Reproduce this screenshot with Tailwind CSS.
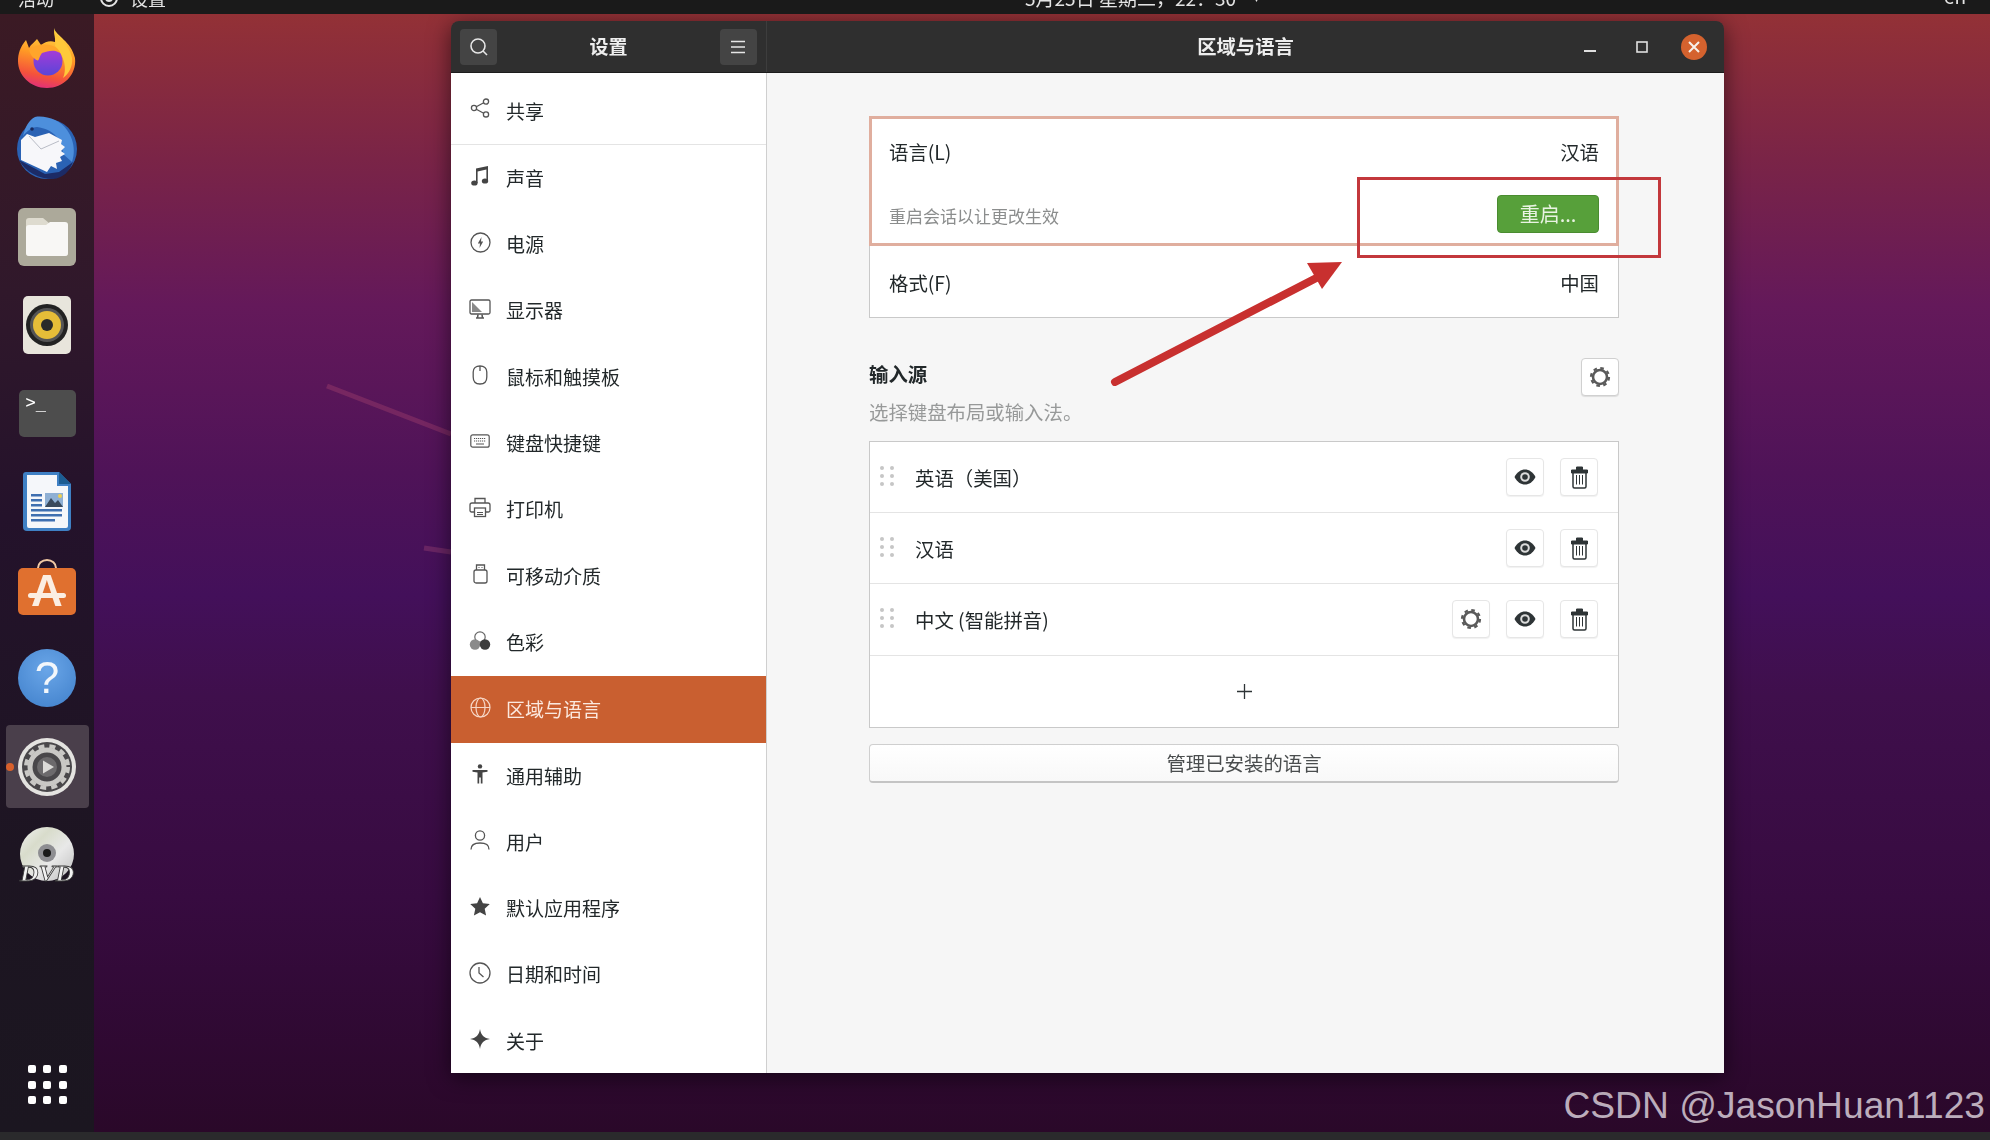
<!DOCTYPE html>
<html lang="zh-CN">
<head>
    <meta charset="UTF-8">
    <title>区域与语言</title>
    <script src="https://cdn.jsdelivr.net/npm/@tailwindcss/browser@4"></script>
</head>
<body class="h-[1140px] w-[1990px] overflow-hidden flex flex-col bg-[#2a2a2c] [font-family:'Noto_Sans_CJK_SC','Noto_Sans',sans-serif]">

    <!-- Top bar (cut off by the screenshot) -->
    <header class="h-[14px] shrink-0 overflow-hidden bg-[#1a1a1a] text-[#e4e4e4] text-[18px] leading-[18px] relative blur-[0.4px]">
        <div class="-mt-[11px] h-[18px] flex items-center justify-between pl-[18px] pr-[24px]">
            <div class="flex items-center">
                <span>活动</span>
                <svg class="ml-[44px] mr-[10px]" width="22" height="22" viewBox="0 0 22 22" fill="none" stroke="#e4e4e4" stroke-width="2"><circle cx="11" cy="11" r="8"/><circle cx="11" cy="11" r="3"/></svg>
                <span>设置</span>
            </div>
            <div class="absolute left-[1025px] top-[-11px] flex items-center whitespace-nowrap text-[19px]">
                <span>5月25日 星期二，22：30</span>
                <span class="ml-[18px] text-[10px]">▾</span>
            </div>
            <span class="-mt-[5px] text-[19px]">en</span>
        </div>
    </header>

    <div class="flex-1 flex min-h-0">
        <!-- Dock -->
        <nav class="w-[94px] shrink-0 flex flex-col items-center pt-[2px] pb-[28px] blur-[0.4px] bg-[linear-gradient(180deg,#3b1a24_0%,#30182b_25%,#24122b_45%,#1d1522_75%,#1b1620_100%)]">
            <div class="h-[88.3px] w-full flex items-center justify-center">
                <svg class="-mt-[4px]" width="60" height="60" viewBox="0 0 60 60">
                    <defs>
                        <linearGradient id="ffBody" x1="0.6" y1="0" x2="0.4" y2="1"><stop offset="0" stop-color="#ffe14a"/><stop offset="0.45" stop-color="#ff9a25"/><stop offset="0.8" stop-color="#f4523b"/><stop offset="1" stop-color="#e0307a"/></linearGradient>
                        <linearGradient id="ffBall" x1="0.5" y1="0" x2="0.5" y2="1"><stop offset="0" stop-color="#b03ad8"/><stop offset="1" stop-color="#5a45d8"/></linearGradient>
                    </defs>
                    <path d="M37 0C39 8 54 13 58 30C60 47 46 60 30 60C13 60 1 47 1 33C1 26 3 19 9 12L12 20C14 16 18 14 20 11L24 17C28 14 33 12 38 14C39 9 37 5 37 0Z" fill="url(#ffBody)"/>
                    <path d="M37 2C40 9 52 15 55 30C56 38 52 46 46 50C50 42 48 28 38 18C39 12 37 7 37 2Z" fill="#ffc93a"/>
                    <circle cx="31" cy="33" r="14.5" fill="url(#ffBall)"/>
                    <path d="M12 22C18 17 27 15 36 18C40 19.5 42 22 43 25C37 21 31 23 25 25C21 30 23 35 18 31C15 29 13 26 12 22Z" fill="#ffa52b"/>
                </svg>
            </div>
            <div class="h-[88.3px] w-full flex items-center justify-center">
                <svg width="64" height="64" viewBox="0 0 64 64">
                    <circle cx="32" cy="33" r="30" fill="#2a62b4"/>
                    <path d="M20 1C30 -1 46 4 52 14C58 22 61 34 57 46L48 38C48 24 38 13 22 11C17 11 12 15 8 20C10 11 14 4 20 1Z" fill="#4d8fdc"/>
                    <path d="M4 44C10 56 24 63 38 63C48 62 54 56 58 46L44 56L30 58Z" fill="#1c2b66"/>
                    <path d="M6 24L12 18L20 21L34 17L47 24L46 28L50 31L46 35L50 38L45 41L47 45L41 47L42 53L36 50L32 56L6 44Z" fill="#f7f7fa"/>
                    <path d="M14 20L26 33L44 25" fill="none" stroke="#b9bcc6" stroke-width="1"/>
                    <circle cx="17" cy="13" r="1.8" fill="#1a2a5e"/>
                </svg>
            </div>
            <div class="h-[88.3px] w-full flex items-center justify-center">
                <svg width="58" height="58" viewBox="0 0 58 58">
                    <rect width="58" height="58" rx="6" fill="#aca99a"/>
                    <path d="M8 13a3 3 0 0 1 3-3h14l6 5h16a3 3 0 0 1 3 3v27a3 3 0 0 1-3 3H11a3 3 0 0 1-3-3Z" fill="#dedbcf"/>
                    <path d="M8 20a3 3 0 0 1 3-3h17l4-3h15a3 3 0 0 1 3 3v28a3 3 0 0 1-3 3H11a3 3 0 0 1-3-3Z" fill="#f8f7f5"/>
                </svg>
            </div>
            <div class="h-[88.3px] w-full flex items-center justify-center">
                <svg width="48" height="58" viewBox="0 0 48 58">
                    <rect width="48" height="58" rx="5" fill="#e8e5dc"/>
                    <circle cx="24" cy="29" r="21" fill="#222"/>
                    <circle cx="24" cy="29" r="17" fill="#555"/>
                    <circle cx="24" cy="29" r="14" fill="#e6bd38"/>
                    <circle cx="24" cy="29" r="6" fill="#2a2a2a"/>
                </svg>
            </div>
            <div class="h-[88.3px] w-full flex items-center justify-center">
                <div class="w-[57px] h-[47px] rounded-[5px] bg-[#4d4d4d] relative">
                    <span class="absolute left-[7px] top-[1px] text-[17px] leading-[22px] text-white [font-family:'DejaVu_Sans_Mono',monospace]">&gt;_</span>
                </div>
            </div>
            <div class="h-[88.3px] w-full flex items-center justify-center">
                <svg width="48" height="60" viewBox="0 0 48 60">
                    <path d="M3 0H36L48 12V55a4 4 0 0 1-4 4H4a4 4 0 0 1-4-4V3a3 3 0 0 1 3-3Z" fill="#3f80c4"/>
                    <path d="M4 3H34V14H45V54a2 2 0 0 1-2 2H6a2 2 0 0 1-2-2Z" fill="#f5f7fa"/>
                    <path d="M36 0L48 12H36Z" fill="#1c5d92"/>
                    <g fill="#3f6fb0"><rect x="8" y="22" width="11" height="2.5"/><rect x="8" y="27" width="11" height="2.5"/><rect x="8" y="32" width="11" height="2.5"/><rect x="8" y="37" width="31" height="2.5"/><rect x="8" y="42" width="31" height="2.5"/><rect x="8" y="47" width="24" height="2.5"/></g>
                    <rect x="22" y="21" width="18" height="14" fill="#8fb0d4"/>
                    <path d="M22 35L28 26L32 31L35 28L40 35Z" fill="#3a4a5c"/>
                    <circle cx="37" cy="24" r="2" fill="#f0d050"/>
                </svg>
            </div>
            <div class="h-[88.3px] w-full flex items-center justify-center">
                <div class="relative w-[58px] h-[56px] -mt-[6px]">
                    <svg class="absolute left-[18px] top-0" width="22" height="14" viewBox="0 0 22 14" fill="none" stroke="#f1c9a4" stroke-width="2"><path d="M2 14V9a9 8 0 0 1 18 0v5"/></svg>
                    <div class="absolute left-0 right-0 bottom-0 h-[47px] rounded-[5px] bg-[#e0702f] flex items-center justify-center text-[44px] leading-none font-bold text-[#fbeee2] [font-family:'Liberation_Sans',sans-serif]">A</div>
                    <span class="absolute left-[10px] top-[34px] w-[38px] h-[5px] rounded-full bg-[#fbeee2]"></span>
                </div>
            </div>
            <div class="h-[88.3px] w-full flex items-center justify-center">
                <div class="w-[58px] h-[58px] rounded-full bg-[radial-gradient(circle_at_50%_35%,#6aa6e8,#3f7fca)] flex items-center justify-center text-[44px] leading-none text-[#f3f7fb] [font-family:'Liberation_Sans',sans-serif]">?</div>
            </div>
            <div class="h-[88.3px] w-full flex items-center justify-center relative">
                <div class="w-[83px] h-[83px] rounded-[4px] bg-[#4a3f4b] flex items-center justify-center">
                    <svg width="58" height="58" viewBox="0 0 58 58" fill="none">
                        <circle cx="29" cy="29" r="29" fill="#e4e3e0"/>
                        <circle cx="29" cy="29" r="25" fill="#49474a"/>
                        <circle cx="29" cy="29" r="17" stroke="#c9c8c5" stroke-width="5"/>
                        <circle cx="29" cy="29" r="21" stroke="#c9c8c5" stroke-width="4" stroke-dasharray="6 5.2"/>
                        <circle cx="29" cy="29" r="10" fill="#6c6a6c"/>
                        <path d="M25 22.5L36 29L25 35.5Z" fill="#dcdbd8"/>
                    </svg>
                </div>
                <span class="absolute left-[6px] top-[41px] w-[8px] h-[8px] rounded-full bg-[#d8602c]"></span>
            </div>
            <div class="h-[88.3px] w-full flex items-center justify-center">
                <svg width="58" height="60" viewBox="0 0 58 60" class="overflow-visible">
                    <defs><linearGradient id="disc" x1="0" y1="0" x2="1" y2="1"><stop offset="0" stop-color="#f0f0f0"/><stop offset="0.3" stop-color="#d8dccb"/><stop offset="0.6" stop-color="#e8e8e8"/><stop offset="1" stop-color="#bdbdbd"/></linearGradient></defs>
                    <circle cx="29" cy="29" r="27" fill="url(#disc)"/>
                    <circle cx="29" cy="28" r="9" fill="#8e8e92"/>
                    <circle cx="29" cy="28" r="4" fill="#1a1a1a"/>
                    <text x="29" y="56" text-anchor="middle" textLength="54" lengthAdjust="spacingAndGlyphs" font-family="Liberation Serif" font-weight="700" font-style="italic" font-size="24" fill="#f2f2f2" stroke="#3a3a3a" stroke-width="0.8">DVD</text>
                </svg>
            </div>
            <div class="mt-auto grid grid-cols-3 gap-x-[7.5px] gap-y-[7.5px]">
                <span class="w-[8px] h-[8px] rounded-[2px] bg-white"></span><span class="w-[8px] h-[8px] rounded-[2px] bg-white"></span><span class="w-[8px] h-[8px] rounded-[2px] bg-white"></span>
                <span class="w-[8px] h-[8px] rounded-[2px] bg-white"></span><span class="w-[8px] h-[8px] rounded-[2px] bg-white"></span><span class="w-[8px] h-[8px] rounded-[2px] bg-white"></span>
                <span class="w-[8px] h-[8px] rounded-[2px] bg-white"></span><span class="w-[8px] h-[8px] rounded-[2px] bg-white"></span><span class="w-[8px] h-[8px] rounded-[2px] bg-white"></span>
            </div>
        </nav>

        <!-- Desktop -->
        <main class="flex-1 relative overflow-hidden bg-[linear-gradient(180deg,#933136_0%,#7a2447_13%,#64195a_26%,#4f1358_41%,#43105a_52%,#3f0f4c_61%,#370b40_79%,#2a0829_100%)]">
            <svg class="absolute left-0 top-0" width="400" height="560" fill="none">
                <path d="M233 372L357 420" stroke="#b0486f" stroke-opacity="0.35" stroke-width="5"/>
                <path d="M330 534L357 538" stroke="#a84a78" stroke-opacity="0.35" stroke-width="5"/>
            </svg>
            <p class="absolute right-[5px] bottom-[7px] text-[37.2px] leading-[40px] whitespace-nowrap text-[#bcadbc] [font-family:'Liberation_Sans',sans-serif]">CSDN @JasonHuan1123</p>

            <!-- Settings window -->
            <section class="absolute left-[357px] top-[7px] w-[1273px] h-[1052px] flex flex-col rounded-t-[8px] overflow-hidden blur-[0.4px] shadow-[0_4px_22px_rgba(0,0,0,0.55)]">
                <div class="h-[52px] shrink-0 flex bg-[#2f2f2f] text-[#eeeeee] border-b border-[#1c1c1c]">
                    <div class="w-[315px] flex items-center justify-between px-[9px]">
                        <button class="w-[37px] h-[36px] rounded-[4px] bg-[#444444] flex items-center justify-center">
                            <svg width="20" height="20" viewBox="0 0 20 20" fill="none" stroke="#e6e6e6" stroke-width="1.6"><circle cx="9" cy="9" r="7"/><path d="M14 14L18 18"/></svg>
                        </button>
                        <span class="text-[19px] font-bold">设置</span>
                        <button class="w-[37px] h-[36px] rounded-[4px] bg-[#444444] flex items-center justify-center">
                            <svg width="16" height="14" viewBox="0 0 16 14" stroke="#e6e6e6" stroke-width="1.6"><path d="M1 1.5H15M1 7H15M1 12.5H15"/></svg>
                        </button>
                    </div>
                    <div class="w-px bg-[#3d3d3d]"></div>
                    <div class="flex-1 grid grid-cols-[1fr_auto_1fr] items-center">
                        <span></span>
                        <span class="text-[19.3px] font-bold">区域与语言</span>
                        <div class="flex items-center justify-end gap-[26px] pr-[17px]">
                            <span class="w-[26px] h-[26px] flex items-center justify-center">
                                <svg width="12" height="12" viewBox="0 0 12 12" stroke="#e0e0e0" stroke-width="2"><path d="M0 10H12"/></svg>
                            </span>
                            <span class="w-[26px] h-[26px] flex items-center justify-center">
                                <svg width="12" height="12" viewBox="0 0 12 12" fill="none" stroke="#e0e0e0" stroke-width="1.6"><rect x="1" y="1" width="10" height="10"/></svg>
                            </span>
                            <span class="w-[26px] h-[26px] rounded-full bg-[#d4622e] flex items-center justify-center">
                                <svg width="12" height="12" viewBox="0 0 12 12" stroke="#f6f0ea" stroke-width="2"><path d="M1 1L11 11M11 1L1 11"/></svg>
                            </span>
                        </div>
                    </div>
                </div>

                <div class="flex-1 flex min-h-0 relative">
                    <!-- Sidebar -->
                    <aside class="w-[316px] shrink-0 bg-white border-r border-[#cfcfcf] text-[19px] text-[#22282a]">
                        <a class="h-[72px] flex items-center pl-[18px] pt-[5px] gap-[15px] border-b border-[#e4e4e4]">
                            <span class="w-[22px] flex justify-center -mt-[6px]"><svg width="20" height="20" viewBox="0 0 20 20" fill="none" stroke="#555" stroke-width="1.3"><circle cx="4" cy="10" r="2.6"/><circle cx="16" cy="3.6" r="2.6"/><circle cx="16" cy="16.4" r="2.6"/><path d="M6.3 8.8L13.7 4.8M6.3 11.2L13.7 15.2"/></svg></span>
                            <span>共享</span>
                        </a>
                        <a class="h-[66.3px] flex items-center pl-[18px] gap-[15px]">
                            <span class="w-[22px] flex justify-center -mt-[4px]"><svg width="18" height="20" viewBox="0 0 18 20" fill="#444"><path d="M5 2.5L17 0V15h-1.6V3.6L6.6 5.4V17H5Z"/><ellipse cx="3.4" cy="17" rx="3.2" ry="2.6"/><ellipse cx="14" cy="15" rx="3.2" ry="2.6"/></svg></span>
                            <span>声音</span>
                        </a>
                        <a class="h-[66.3px] flex items-center pl-[18px] gap-[15px]">
                            <span class="w-[22px] flex justify-center -mt-[4px]"><svg width="21" height="21" viewBox="0 0 21 21" fill="none" stroke="#555" stroke-width="1.3"><circle cx="10.5" cy="10.5" r="9.5"/><path d="M11.5 5L7.8 11.4H10L9.5 16L13.2 9.6H11Z" fill="#555" stroke="none"/></svg></span>
                            <span>电源</span>
                        </a>
                        <a class="h-[66.3px] flex items-center pl-[18px] gap-[15px]">
                            <span class="w-[22px] flex justify-center -mt-[4px]"><svg width="22" height="20" viewBox="0 0 22 20" fill="none" stroke="#555" stroke-width="1.3"><rect x="1" y="1" width="20" height="14" rx="1.5"/><path d="M3 3L13 13H3Z" fill="#888" stroke="none"/><path d="M7 19H15M9 15.5L8.5 19M13 15.5L13.5 19" stroke-width="1.6"/></svg></span>
                            <span>显示器</span>
                        </a>
                        <a class="h-[66.3px] flex items-center pl-[18px] gap-[15px]">
                            <span class="w-[22px] flex justify-center -mt-[4px]"><svg width="16" height="20" viewBox="0 0 16 20" fill="none" stroke="#555" stroke-width="1.3"><path d="M1.2 7C1.2 3 4 1 8 1S14.8 3 14.8 7V12C14.8 16.5 12 19 8 19S1.2 16.5 1.2 12Z"/><path d="M8 1V6"/></svg></span>
                            <span>鼠标和触摸板</span>
                        </a>
                        <a class="h-[66.3px] flex items-center pl-[18px] gap-[15px]">
                            <span class="w-[22px] flex justify-center -mt-[4px]"><svg width="20" height="14" viewBox="0 0 20 14" fill="none" stroke="#555" stroke-width="1.2"><rect x="0.8" y="0.8" width="18.4" height="12.4" rx="2"/><path d="M4 4.5H16M4 7H16" stroke-dasharray="1.2 0.8"/><path d="M6 10H14"/></svg></span>
                            <span>键盘快捷键</span>
                        </a>
                        <a class="h-[66.3px] flex items-center pl-[18px] gap-[15px]">
                            <span class="w-[22px] flex justify-center -mt-[4px]"><svg width="22" height="21" viewBox="0 0 22 21" fill="none" stroke="#555" stroke-width="1.3"><path d="M6 6V1.5H16V6"/><path d="M5 15H2.5A1.5 1.5 0 0 1 1 13.5V8A2 2 0 0 1 3 6H19A2 2 0 0 1 21 8V13.5A1.5 1.5 0 0 1 19.5 15H17"/><rect x="5.5" y="11" width="11" height="8.5"/><path d="M8 15.5H14M8 17.5H14" stroke-width="1"/></svg></span>
                            <span>打印机</span>
                        </a>
                        <a class="h-[66.3px] flex items-center pl-[18px] gap-[15px]">
                            <span class="w-[22px] flex justify-center -mt-[4px]"><svg width="15" height="20" viewBox="0 0 15 20" fill="none" stroke="#555" stroke-width="1.3"><rect x="1" y="6" width="13" height="13" rx="2"/><path d="M3.5 6V1H11.5V6"/><path d="M5.5 3.5H6.5M8.5 3.5H9.5" stroke-width="1"/></svg></span>
                            <span>可移动介质</span>
                        </a>
                        <a class="h-[66.3px] flex items-center pl-[18px] gap-[15px]">
                            <span class="w-[22px] flex justify-center -mt-[4px]"><svg width="22" height="19" viewBox="0 0 22 19"><circle cx="11" cy="6" r="5.2" fill="#fff" stroke="#666" stroke-width="1.2"/><circle cx="6" cy="13.5" r="5.2" fill="#8a8a8a"/><circle cx="16" cy="13.5" r="5.2" fill="#3c3c3c"/></svg></span>
                            <span>色彩</span>
                        </a>
                        <a class="h-[66.3px] mt-[1px] flex items-center pl-[18px] gap-[15px] bg-[#c95f30] text-[#fbe8de]">
                            <span class="w-[22px] flex justify-center -mt-[4px]"><svg width="21" height="21" viewBox="0 0 21 21" fill="none" stroke="#f6d6c6" stroke-width="1.2"><circle cx="10.5" cy="10.5" r="9.5"/><ellipse cx="10.5" cy="10.5" rx="4.5" ry="9.5"/><path d="M1 10.5H20"/></svg></span>
                            <span>区域与语言</span>
                        </a>
                        <a class="h-[66.3px] flex items-center pl-[18px] gap-[15px]">
                            <span class="w-[22px] flex justify-center -mt-[4px]"><svg width="16" height="20" viewBox="0 0 16 20" fill="#444"><circle cx="8" cy="2.4" r="2.2"/><path d="M0.5 6H15.5V7.8L10.5 8.5V19.5H8.8V13.5H7.2V19.5H5.5V8.5L0.5 7.8Z"/></svg></span>
                            <span>通用辅助</span>
                        </a>
                        <a class="h-[66.3px] flex items-center pl-[18px] gap-[15px]">
                            <span class="w-[22px] flex justify-center -mt-[4px]"><svg width="20" height="20" viewBox="0 0 20 20" fill="none" stroke="#555" stroke-width="1.3"><circle cx="10" cy="5.5" r="4.6"/><path d="M1 19.5C1 15 4 13 10 13S19 15 19 19.5"/></svg></span>
                            <span>用户</span>
                        </a>
                        <a class="h-[66.3px] flex items-center pl-[18px] gap-[15px]">
                            <span class="w-[22px] flex justify-center -mt-[4px]"><svg width="20" height="19" viewBox="0 0 20 19" fill="#444"><path d="M10 0L12.9 6.3L19.8 7.1L14.7 11.8L16.1 18.6L10 15.2L3.9 18.6L5.3 11.8L0.2 7.1L7.1 6.3Z"/></svg></span>
                            <span>默认应用程序</span>
                        </a>
                        <a class="h-[66.3px] flex items-center pl-[18px] gap-[15px]">
                            <span class="w-[22px] flex justify-center -mt-[4px]"><svg width="22" height="22" viewBox="0 0 22 22" fill="none" stroke="#555" stroke-width="1.3"><circle cx="11" cy="11" r="10"/><path d="M10 5V11L14.5 15"/></svg></span>
                            <span>日期和时间</span>
                        </a>
                        <a class="h-[66.3px] flex items-center pl-[18px] gap-[15px]">
                            <span class="w-[22px] flex justify-center -mt-[4px]"><svg width="20" height="20" viewBox="0 0 20 20" fill="#444"><path d="M10 0C10.8 6 14 9.2 20 10C14 10.8 10.8 14 10 20C9.2 14 6 10.8 0 10C6 9.2 9.2 6 10 0Z"/></svg></span>
                            <span>关于</span>
                        </a>
                    </aside>

                    <!-- Region and language panel -->
                    <div class="flex-1 bg-[#f6f6f6] pl-[102px] pr-[105px] pt-[43px] text-[19.4px] text-[#22282a]">
                        <div class="border border-[#c9c9c9] bg-white">
                            <div class="-m-px border-[3px] border-[#e0ae9e]">
                                <div class="h-[66px] flex items-center justify-between px-[17px]">
                                    <span>语言(L)</span>
                                    <span>汉语</span>
                                </div>
                                <div class="h-[58px] flex items-center justify-between px-[17px]">
                                    <span class="text-[17px] text-[#8b8d8d] pt-[3px]">重启会话以让更改生效</span>
                                    <button class="w-[102px] h-[38px] rounded-[4px] bg-[#57a03a] border border-[#4a8c30] text-[20px] leading-[32px] text-[#e9f3e2]">重启...</button>
                                </div>
                            </div>
                            <div class="h-[72px] flex items-center justify-between px-[19px] pt-[3px]">
                                <span>格式(F)</span>
                                <span>中国</span>
                            </div>
                        </div>

                        <div class="mt-[40px] mb-[15px] flex items-start justify-between">
                            <div class="pt-[2px]">
                                <h2 class="h-[28px] leading-[28px] font-bold">输入源</h2>
                                <p class="mt-[10px] h-[28px] leading-[28px] text-[#979999]">选择键盘布局或输入法。</p>
                            </div>
                            <button class="w-[38px] h-[38px] rounded-[4px] bg-white border border-[#d0d0d0] shadow-[0_1px_1px_rgba(0,0,0,0.1)] flex items-center justify-center">
                                <svg width="22" height="22" viewBox="0 0 22 22" fill="none" stroke="#5a5a5a"><circle cx="11" cy="11" r="7" stroke-width="2.6"/><circle cx="11" cy="11" r="9" stroke-width="2.2" stroke-dasharray="3.6 3.47"/></svg>
                            </button>
                        </div>

                        <div class="border border-[#c9c9c9] bg-white">
                            <div class="h-[71.2px] flex items-center pl-[10px] pr-[20px] border-b border-[#e4e4e4]">
                                <span class="w-[14px] -mt-[2px] grid grid-cols-2 gap-x-[5px] gap-y-[4px] justify-items-center"><i class="w-[4px] h-[4px] rounded-full bg-[#c6c6c6]"></i><i class="w-[4px] h-[4px] rounded-full bg-[#c6c6c6]"></i><i class="w-[4px] h-[4px] rounded-full bg-[#c6c6c6]"></i><i class="w-[4px] h-[4px] rounded-full bg-[#c6c6c6]"></i><i class="w-[4px] h-[4px] rounded-full bg-[#c6c6c6]"></i><i class="w-[4px] h-[4px] rounded-full bg-[#c6c6c6]"></i></span>
                                <span class="ml-[21px] flex-1">英语（美国）</span>
                                <div class="flex gap-[16px]">
                                    <button class="w-[38px] h-[38px] rounded-[4px] bg-white border border-[#e6e6e6] shadow-[0_1px_1px_rgba(0,0,0,0.06)] flex items-center justify-center">
                                        <svg width="22" height="16" viewBox="0 0 22 16"><path d="M0.5 8C3 3 7 0.5 11 0.5S19 3 21.5 8C19 13 15 15.5 11 15.5S3 13 0.5 8Z" fill="#2e3436"/><circle cx="11" cy="8" r="4.8" fill="#dcdcdc"/><circle cx="11" cy="8" r="2.8" fill="#2e3436"/></svg>
                                    </button>
                                    <button class="w-[38px] h-[38px] rounded-[4px] bg-white border border-[#e6e6e6] shadow-[0_1px_1px_rgba(0,0,0,0.06)] flex items-center justify-center">
                                        <svg width="17" height="23" viewBox="0 0 17 23" fill="none" stroke="#2e3436"><path d="M0.5 4H16.5V7H0.5Z" fill="#2e3436"/><path d="M5.5 4V1H11.5V4" fill="#2e3436"/><path d="M2 7V20.5A1.5 1.5 0 0 0 3.5 22H13.5A1.5 1.5 0 0 0 15 20.5V7" stroke-width="1.5"/><path d="M5.5 9V18.5M8.5 9V18.5M11.5 9V18.5" stroke-width="1"/></svg>
                                    </button>
                                </div>
                            </div>
                            <div class="h-[71.2px] flex items-center pl-[10px] pr-[20px] border-b border-[#e4e4e4]">
                                <span class="w-[14px] -mt-[2px] grid grid-cols-2 gap-x-[5px] gap-y-[4px] justify-items-center"><i class="w-[4px] h-[4px] rounded-full bg-[#c6c6c6]"></i><i class="w-[4px] h-[4px] rounded-full bg-[#c6c6c6]"></i><i class="w-[4px] h-[4px] rounded-full bg-[#c6c6c6]"></i><i class="w-[4px] h-[4px] rounded-full bg-[#c6c6c6]"></i><i class="w-[4px] h-[4px] rounded-full bg-[#c6c6c6]"></i><i class="w-[4px] h-[4px] rounded-full bg-[#c6c6c6]"></i></span>
                                <span class="ml-[21px] flex-1">汉语</span>
                                <div class="flex gap-[16px]">
                                    <button class="w-[38px] h-[38px] rounded-[4px] bg-white border border-[#e6e6e6] shadow-[0_1px_1px_rgba(0,0,0,0.06)] flex items-center justify-center">
                                        <svg width="22" height="16" viewBox="0 0 22 16"><path d="M0.5 8C3 3 7 0.5 11 0.5S19 3 21.5 8C19 13 15 15.5 11 15.5S3 13 0.5 8Z" fill="#2e3436"/><circle cx="11" cy="8" r="4.8" fill="#dcdcdc"/><circle cx="11" cy="8" r="2.8" fill="#2e3436"/></svg>
                                    </button>
                                    <button class="w-[38px] h-[38px] rounded-[4px] bg-white border border-[#e6e6e6] shadow-[0_1px_1px_rgba(0,0,0,0.06)] flex items-center justify-center">
                                        <svg width="17" height="23" viewBox="0 0 17 23" fill="none" stroke="#2e3436"><path d="M0.5 4H16.5V7H0.5Z" fill="#2e3436"/><path d="M5.5 4V1H11.5V4" fill="#2e3436"/><path d="M2 7V20.5A1.5 1.5 0 0 0 3.5 22H13.5A1.5 1.5 0 0 0 15 20.5V7" stroke-width="1.5"/><path d="M5.5 9V18.5M8.5 9V18.5M11.5 9V18.5" stroke-width="1"/></svg>
                                    </button>
                                </div>
                            </div>
                            <div class="h-[71.2px] flex items-center pl-[10px] pr-[20px] border-b border-[#e4e4e4]">
                                <span class="w-[14px] -mt-[2px] grid grid-cols-2 gap-x-[5px] gap-y-[4px] justify-items-center"><i class="w-[4px] h-[4px] rounded-full bg-[#c6c6c6]"></i><i class="w-[4px] h-[4px] rounded-full bg-[#c6c6c6]"></i><i class="w-[4px] h-[4px] rounded-full bg-[#c6c6c6]"></i><i class="w-[4px] h-[4px] rounded-full bg-[#c6c6c6]"></i><i class="w-[4px] h-[4px] rounded-full bg-[#c6c6c6]"></i><i class="w-[4px] h-[4px] rounded-full bg-[#c6c6c6]"></i></span>
                                <span class="ml-[21px] flex-1">中文 (智能拼音)</span>
                                <div class="flex gap-[16px]">
                                    <button class="w-[38px] h-[38px] rounded-[4px] bg-white border border-[#e6e6e6] shadow-[0_1px_1px_rgba(0,0,0,0.06)] flex items-center justify-center">
                                        <svg width="22" height="22" viewBox="0 0 22 22" fill="none" stroke="#5a5a5a"><circle cx="11" cy="11" r="7" stroke-width="2.6"/><circle cx="11" cy="11" r="9" stroke-width="2.2" stroke-dasharray="3.6 3.47"/></svg>
                                    </button>
                                    <button class="w-[38px] h-[38px] rounded-[4px] bg-white border border-[#e6e6e6] shadow-[0_1px_1px_rgba(0,0,0,0.06)] flex items-center justify-center">
                                        <svg width="22" height="16" viewBox="0 0 22 16"><path d="M0.5 8C3 3 7 0.5 11 0.5S19 3 21.5 8C19 13 15 15.5 11 15.5S3 13 0.5 8Z" fill="#2e3436"/><circle cx="11" cy="8" r="4.8" fill="#dcdcdc"/><circle cx="11" cy="8" r="2.8" fill="#2e3436"/></svg>
                                    </button>
                                    <button class="w-[38px] h-[38px] rounded-[4px] bg-white border border-[#e6e6e6] shadow-[0_1px_1px_rgba(0,0,0,0.06)] flex items-center justify-center">
                                        <svg width="17" height="23" viewBox="0 0 17 23" fill="none" stroke="#2e3436"><path d="M0.5 4H16.5V7H0.5Z" fill="#2e3436"/><path d="M5.5 4V1H11.5V4" fill="#2e3436"/><path d="M2 7V20.5A1.5 1.5 0 0 0 3.5 22H13.5A1.5 1.5 0 0 0 15 20.5V7" stroke-width="1.5"/><path d="M5.5 9V18.5M8.5 9V18.5M11.5 9V18.5" stroke-width="1"/></svg>
                                    </button>
                                </div>
                            </div>
                            <div class="h-[71.2px] flex items-center justify-center">
                                <svg width="15" height="15" viewBox="0 0 15 15" stroke="#2e3436" stroke-width="1.3"><path d="M7.5 0V15M0 7.5H15"/></svg>
                            </div>
                        </div>

                        <button class="mt-[16px] w-full h-[39px] rounded-[4px] bg-[linear-gradient(180deg,#ffffff,#f8f8f8)] border border-[#cfcfcf] border-b-2 border-b-[#c4c4c4] text-[#4a4d4e]">管理已安装的语言</button>
                    </div>

                    <!-- Annotation drawn over the screenshot -->
                    <div class="absolute left-[906px] top-[104px] w-[304px] h-[81px] border-[3px] border-[#c3383c]"></div>
                    <svg class="absolute left-[650px] top-[183px]" width="250" height="130" viewBox="0 0 250 130">
                        <path d="M14 126L225 17" stroke="#c8302f" stroke-width="8" stroke-linecap="round"/>
                        <path d="M241 6L206 7L221 33Z" fill="#c8302f"/>
                    </svg>
                </div>
            </section>
        </main>
    </div>

    <footer class="h-[8px] shrink-0 bg-[#2a2a2c]"></footer>
</body>
</html>
